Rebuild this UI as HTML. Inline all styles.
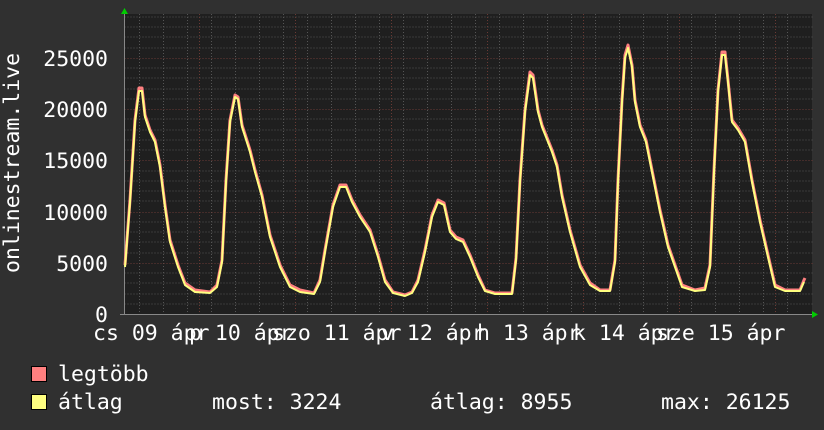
<!DOCTYPE html>
<html><head><meta charset="utf-8"><style>
html,body{margin:0;padding:0;background:#303030;}
svg{display:block}
text{font-family:"DejaVu Sans Mono","Liberation Mono",monospace;font-size:21.5px;fill:#fff}
</style></head><body>
<svg width="824" height="430" viewBox="0 0 824 430" xmlns="http://www.w3.org/2000/svg">
<rect width="824" height="430" fill="#303030"/>
<rect x="124" y="14" width="688" height="300" fill="#1f1f1f"/>
<g stroke="#555" stroke-width="1" stroke-dasharray="1,2" shape-rendering="crispEdges">
<path d="M124.5 304h688M124.5 294h688M124.5 283h688M124.5 273h688M124.5 253h688M124.5 242h688M124.5 232h688M124.5 222h688M124.5 201h688M124.5 191h688M124.5 181h688M124.5 171h688M124.5 150h688M124.5 140h688M124.5 130h688M124.5 119h688M124.5 99h688M124.5 89h688M124.5 78h688M124.5 68h688M124.5 48h688M124.5 37h688M124.5 27h688M124.5 17h688"/>
<path d="M139.5 14v300M163.5 14v300M187.5 14v300M211.5 14v300M235.5 14v300M259.5 14v300M283.5 14v300M307.5 14v300M331.5 14v300M355.5 14v300M379.5 14v300M403.5 14v300M427.5 14v300M451.5 14v300M475.5 14v300M499.5 14v300M523.5 14v300M547.5 14v300M571.5 14v300M595.5 14v300M619.5 14v300M643.5 14v300M667.5 14v300M691.5 14v300M715.5 14v300M739.5 14v300M763.5 14v300M787.5 14v300"/>
</g>
<g stroke="#6a3a34" stroke-width="1" stroke-dasharray="1,2" shape-rendering="crispEdges">
<path d="M124.5 58.5h688M124.5 109.5h688M124.5 160.5h688M124.5 212.5h688M124.5 263.5h688"/>
<path d="M199.5 14v300M295.5 14v300M391.5 14v300M487.5 14v300M583.5 14v300M679.5 14v300M775.5 14v300"/>
</g>
<path d="M124.5 10v305M120 314.5h696" stroke="#888" stroke-width="1"/>
<path d="M121 14l3.5-6 3.5 6z M812 311l6 3.5-6 3.5z" fill="#0c0"/>
<g fill="none" stroke-linejoin="round">
<polyline stroke="#ff8080" stroke-width="3" points="125,265 130,200 135,120 139,88 142,88 145,115 150,130 155,140 160,165 165,205 170,240 178,265 185,283 195,290 210,292 217,285 222,260 226,180 230,120 235,95 238,97 242,125 250,150 255,170 262,195 270,235 280,265 290,285 300,290 314,293 320,280 325,250 333,205 340,185 346,185 352,200 360,215 370,230 378,255 385,280 393,292 405,295 412,292 418,280 425,250 432,215 438,200 444,203 450,230 456,237 463,240 470,255 478,275 485,290 495,293 512,293 516,258 520,180 525,110 530,72 533,75 538,110 542,125 548,140 552,150 557,165 562,195 570,230 580,265 590,283 600,290 610,290 615,260 618,180 622,100 625,55 628,45 632,65 635,100 640,125 646,140 652,170 660,210 668,245 675,265 682,285 695,290 705,288 710,265 714,170 718,90 722,52 725,52 728,80 732,120 738,128 745,140 752,180 760,220 768,255 775,285 785,290 800,290 804,280 805,278"/>
<polyline stroke="#ffff80" stroke-width="2" points="125,267 130,202 135,122 139,91 142,91 145,117 150,132 155,142 160,167 165,207 170,242 178,267 185,285 195,292 210,293 217,287 222,262 226,182 230,122 235,97 238,99 242,127 250,152 255,172 262,197 270,237 280,267 290,287 300,292 314,294 320,282 325,252 333,207 340,187 346,187 352,202 360,217 370,232 378,257 385,282 393,293 405,296 412,293 418,282 425,252 432,217 438,202 444,205 450,232 456,239 463,242 470,257 478,277 485,291 495,294 512,294 516,260 520,182 525,112 530,75 533,78 538,112 542,127 548,142 552,152 557,167 562,197 570,232 580,267 590,285 600,291 610,291 615,262 618,182 622,102 625,58 628,48 632,67 635,102 640,127 646,142 652,172 660,212 668,247 675,267 682,287 695,291 705,290 710,267 714,172 718,92 722,55 725,55 728,82 732,122 738,130 745,142 752,182 760,222 768,257 775,287 785,291 800,291 804,282"/>
</g>
<g text-anchor="end">
<text x="108" y="66">25000</text>
<text x="108" y="117">20000</text>
<text x="108" y="168">15000</text>
<text x="108" y="220">10000</text>
<text x="108" y="271">5000</text>
<text x="108" y="322">0</text>
</g>
<text transform="translate(19,273) rotate(-90)">onlinestream.live</text>
<g>
<text x="93" y="340">cs 09 ápr</text>
<text x="189" y="340">p 10 ápr</text>
<text x="272" y="340">szo 11 ápr</text>
<text x="381" y="340">v 12 ápr</text>
<text x="477" y="340">h 13 ápr</text>
<text x="573" y="340">k 14 ápr</text>
<text x="656" y="340">sze 15 ápr</text>
</g>
<rect x="31.5" y="366.5" width="15" height="15" fill="#ff8080" stroke="#000"/>
<rect x="31.5" y="394.5" width="15" height="15" fill="#ffff80" stroke="#000"/>
<text x="58" y="381">legtöbb</text>
<text x="58" y="409">átlag</text>
<text x="212" y="409">most: 3224</text>
<text x="430" y="409">átlag: 8955</text>
<text x="661" y="409">max: 26125</text>
</svg>
</body></html>
